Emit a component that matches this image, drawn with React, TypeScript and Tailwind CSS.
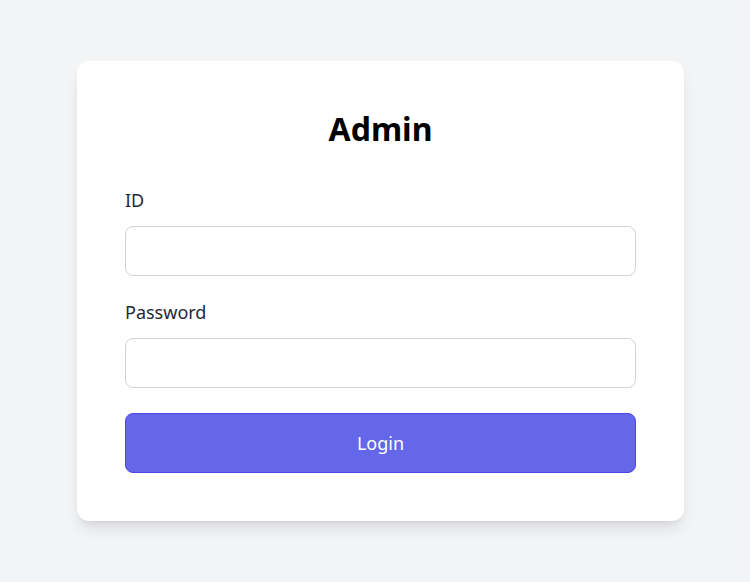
import { useState } from "react";

export default function App() {
  const [id, setId] = useState("");
  const [password, setPassword] = useState("");

  const handleSubmit = (e: React.FormEvent) => {
    e.preventDefault();
  };

  return (
    <div
      className="min-h-screen bg-gray-100 flex items-center justify-center pl-[11px]"
      style={{ fontFamily: '"Noto Sans", "Noto Sans CJK KR", sans-serif' }}
    >
      <form
        onSubmit={handleSubmit}
        className="w-[607px] bg-white rounded-xl shadow-lg p-12 flex flex-col"
      >
        <h1 className="text-[32px] leading-[40px] font-bold text-black text-center mb-[37px]">
          Admin
        </h1>
        <label className="text-lg leading-[28px] text-[#1f2937] mb-3">ID</label>
        <input
          type="text"
          value={id}
          onChange={(e) => setId(e.target.value)}
          className="h-[50px] w-full px-4 rounded-lg border border-[#cfd2d8] focus:outline-none"
        />
        <label className="text-lg leading-[28px] text-[#1f2937] mt-[22px] mb-3">
          Password
        </label>
        <input
          type="password"
          value={password}
          onChange={(e) => setPassword(e.target.value)}
          className="h-[50px] w-full px-4 rounded-lg border border-[#cfd2d8] focus:outline-none"
        />
        <button
          type="submit"
          className="mt-[25px] h-[60px] w-full rounded-lg bg-[#6467e8] border border-[#4f46e5] text-white text-lg"
        >
          Login
        </button>
      </form>
    </div>
  );
}
